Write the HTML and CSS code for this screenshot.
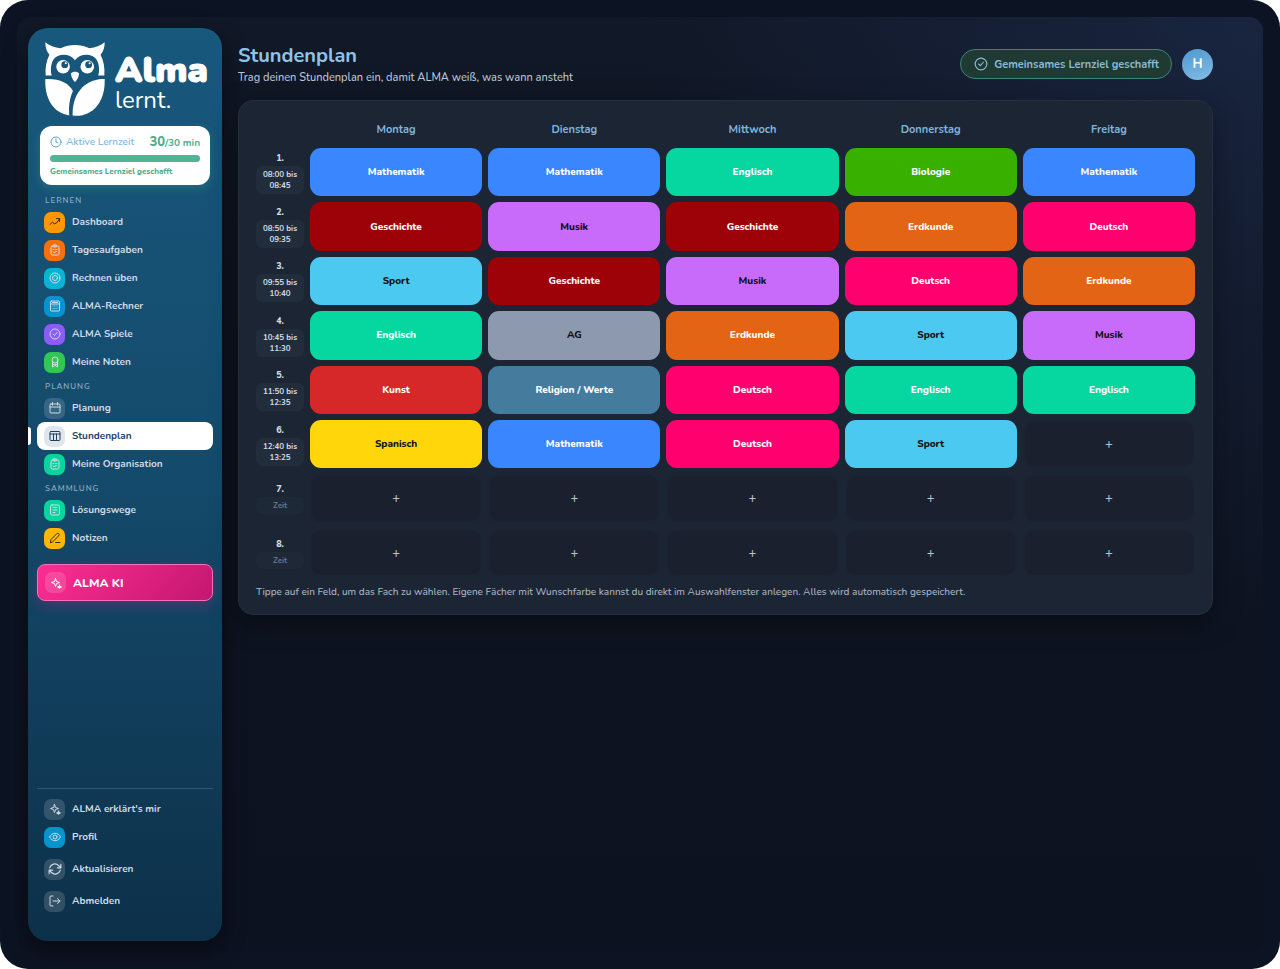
FILE: index.html
```
<!DOCTYPE html>
<html lang="de">
<head>
  <meta charset="UTF-8">
  <meta name="viewport" content="width=device-width, initial-scale=1.0">
  <title>Stundenplan - Alma lernt.</title>
  <link rel="stylesheet" href="styles.css">
</head>
<body>
  <div class="app">
    <div class="shell">
      <aside class="sidebar">
        <a class="logo" href="#">
          <svg class="owl" viewBox="0 0 176 216">
            <path fill="#fff" d="M1 0 C12 9 28 16 46 18 C74 5 102 5 130 18 C148 16 164 9 175 0 C175 14 172 26 163 37 C172 54 176 76 174 98 H156 C160 86 160 66 152 52 C138 32 104 32 88 53 C72 32 38 32 24 52 C16 66 16 86 20 98 H2 C0 76 4 54 13 37 C4 26 1 14 1 0Z"/>
            <circle cx="53" cy="72" r="20" fill="#fff"/>
            <circle cx="124" cy="72" r="20" fill="#fff"/>
            <circle cx="58" cy="66" r="10" fill="#175679"/>
            <circle cx="128" cy="66" r="10" fill="#175679"/>
            <circle cx="61" cy="62" r="3" fill="#fff"/>
            <circle cx="131" cy="62" r="3" fill="#fff"/>
            <path fill="#fff" d="M77 91 C81 85 95 85 99 91 C101 98 94 112 88 117 C82 112 75 98 77 91Z"/>
            <path fill="#fff" d="M1 108 C42 106 69 119 82 143 C74 161 69 181 71 215 C26 209 -2 166 1 108Z"/>
            <path fill="#fff" d="M175 108 C130 106 79 138 81 215 C139 222 178 174 175 108Z"/>
          </svg>
          <span class="logo-text"><b>Alma</b><span>lernt.</span></span>
        </a>

        <div class="learn-card">
          <div class="learn-row">
            <svg class="icon" viewBox="0 0 24 24"><circle cx="12" cy="12" r="10"/><path d="M12 6v6l4 2"/></svg>
            <span class="learn-label">Aktive Lernzeit</span>
            <span class="learn-time"><b>30</b>/30 min</span>
          </div>
          <div class="learn-bar"></div>
          <p>Gemeinsames Lernziel geschafft</p>
        </div>

        <nav class="nav">
          <h2>Lernen</h2>
          <a href="#"><span class="tile orange dark"><svg class="icon" viewBox="0 0 24 24"><path d="M2 17l5-5 4 4 4-2 6-8M15 5h6v6"/></svg></span>Dashboard</a>
          <a href="#"><span class="tile red"><svg class="icon" viewBox="0 0 24 24"><rect x="4" y="4" width="16" height="18" rx="3"/><rect x="9" y="2" width="6" height="4" rx="1"/><path d="M8 11h2M13 11h3M8 16l2 1 5-2"/></svg></span>Tagesaufgaben</a>
          <a href="#"><span class="tile cyan"><svg class="icon" viewBox="0 0 24 24"><circle cx="12" cy="12" r="10"/><circle cx="12" cy="12" r="5"/></svg></span>Rechnen üben</a>
          <a href="#"><span class="tile blue"><svg class="icon" viewBox="0 0 24 24"><rect x="3" y="2" width="18" height="20" rx="2"/><path d="M3 8h18M8 12v.1M12 12v.1M16 12v.1M8 17v.1M12 17v.1M16 17v.1M7 5h10"/></svg></span>ALMA-Rechner</a>
          <a href="#"><span class="tile purple"><svg class="icon" viewBox="0 0 24 24"><circle cx="12" cy="12" r="10"/><path d="M8 12l3 3 5-6"/></svg></span>ALMA Spiele</a>
          <a href="#"><span class="tile green"><svg class="icon" viewBox="0 0 24 24"><circle cx="12" cy="8" r="6"/><path d="M7 12v10l5-3 5 3V12M7 17h10"/></svg></span>Meine Noten</a>
          <h2>Planung</h2>
          <a href="#"><span class="tile"><svg class="icon" viewBox="0 0 24 24"><rect x="2" y="4" width="20" height="18" rx="2"/><path d="M2 10h20M7 1v5M17 1v5"/></svg></span>Planung</a>
          <a href="#" class="active"><span class="tile"><svg class="icon" viewBox="0 0 24 24"><rect x="2" y="3" width="20" height="18" rx="2"/><path d="M2 8h20M9 8v13M15 8v13"/></svg></span>Stundenplan</a>
          <a href="#"><span class="tile mint"><svg class="icon" viewBox="0 0 24 24"><rect x="4" y="4" width="16" height="18" rx="3"/><rect x="9" y="2" width="6" height="4" rx="1"/><path d="M8 11h2M13 11h3M8 16l2 1 5-2"/></svg></span>Meine Organisation</a>
          <h2>Sammlung</h2>
          <a href="#"><span class="tile mint"><svg class="icon" viewBox="0 0 24 24"><rect x="3" y="2" width="18" height="20" rx="3"/><path d="M8 7h8M8 12h8M8 17h4"/></svg></span>Lösungswege</a>
          <a href="#"><span class="tile yellow dark"><svg class="icon" viewBox="0 0 24 24"><path d="M3 21l1-6L16 3c2-2 6 2 4 4L8 19zM13 21h9"/></svg></span>Notizen</a>
        </nav>

        <button class="ki-btn" type="button">
          <span class="tile"><svg class="icon" viewBox="0 0 24 24"><path d="M11 3l2 6 6 2-6 2-2 6-2-6-6-2 6-2z"/><path fill="currentColor" d="M19 16l1 3 3 1-3 1-1 2-1-2-3-1 3-1z"/></svg></span>ALMA KI
        </button>

        <div class="nav nav-bottom">
          <a href="#"><span class="tile"><svg class="icon" viewBox="0 0 24 24"><path d="M11 3l2 6 6 2-6 2-2 6-2-6-6-2 6-2z"/><path fill="currentColor" d="M19 16l1 3 3 1-3 1-1 2-1-2-3-1 3-1z"/></svg></span>ALMA erklärt's mir</a>
          <a href="#"><span class="tile blue"><svg class="icon" viewBox="0 0 24 24"><path d="M1 12c5-10 17-10 22 0-5 10-17 10-22 0z"/><circle cx="12" cy="12" r="4"/></svg></span>Profil</a>
          <button type="button"><span class="tile"><svg class="icon big" viewBox="0 0 24 24"><path d="M3 10a9 9 0 0 1 15-4l4 4M22 4v6h-6M21 14a9 9 0 0 1-15 4l-4-4M2 20v-6h6"/></svg></span>Aktualisieren</button>
          <button type="button"><span class="tile"><svg class="icon" viewBox="0 0 24 24"><path d="M8 2H4a2 2 0 0 0-2 2v16a2 2 0 0 0 2 2h4M8 12h14M17 7l5 5-5 5"/></svg></span>Abmelden</button>
        </div>
      </aside>

      <main class="main">
        <header class="header">
          <div>
            <h1>Stundenplan</h1>
            <p>Trag deinen Stundenplan ein, damit ALMA weiß, was wann ansteht</p>
          </div>
          <div class="header-right">
            <span class="goal"><svg class="icon big" viewBox="0 0 24 24"><circle cx="12" cy="12" r="10"/><path d="M8 12l3 3 5-6"/></svg>Gemeinsames Lernziel geschafft</span>
            <button class="avatar" type="button">H</button>
          </div>
        </header>

        <section class="card">
          <table class="plan">
            <thead>
              <tr><td class="time"></td><th>Montag</th><th>Dienstag</th><th>Mittwoch</th><th>Donnerstag</th><th>Freitag</th></tr>
            </thead>
            <tbody>
              <tr>
                <th class="time">1.<button type="button">08:00 bis<br>08:45</button></th>
                <td><button class="mathe">Mathematik</button></td>
                <td><button class="mathe">Mathematik</button></td>
                <td><button class="englisch">Englisch</button></td>
                <td><button class="bio">Biologie</button></td>
                <td><button class="mathe">Mathematik</button></td>
              </tr>
              <tr>
                <th class="time">2.<button type="button">08:50 bis<br>09:35</button></th>
                <td><button class="geschichte">Geschichte</button></td>
                <td><button class="musik">Musik</button></td>
                <td><button class="geschichte">Geschichte</button></td>
                <td><button class="erdkunde">Erdkunde</button></td>
                <td><button class="deutsch">Deutsch</button></td>
              </tr>
              <tr>
                <th class="time">3.<button type="button">09:55 bis<br>10:40</button></th>
                <td><button class="sport">Sport</button></td>
                <td><button class="geschichte">Geschichte</button></td>
                <td><button class="musik">Musik</button></td>
                <td><button class="deutsch">Deutsch</button></td>
                <td><button class="erdkunde">Erdkunde</button></td>
              </tr>
              <tr>
                <th class="time">4.<button type="button">10:45 bis<br>11:30</button></th>
                <td><button class="englisch">Englisch</button></td>
                <td><button class="ag">AG</button></td>
                <td><button class="erdkunde">Erdkunde</button></td>
                <td><button class="sport">Sport</button></td>
                <td><button class="musik">Musik</button></td>
              </tr>
              <tr>
                <th class="time">5.<button type="button">11:50 bis<br>12:35</button></th>
                <td><button class="kunst">Kunst</button></td>
                <td><button class="religion">Religion / Werte</button></td>
                <td><button class="deutsch">Deutsch</button></td>
                <td><button class="englisch">Englisch</button></td>
                <td><button class="englisch">Englisch</button></td>
              </tr>
              <tr>
                <th class="time">6.<button type="button">12:40 bis<br>13:25</button></th>
                <td><button class="spanisch">Spanisch</button></td>
                <td><button class="mathe">Mathematik</button></td>
                <td><button class="deutsch">Deutsch</button></td>
                <td><button class="sport">Sport</button></td>
                <td><button class="empty">+</button></td>
              </tr>
              <tr>
                <th class="time">7.<button type="button" class="unset">Zeit</button></th>
                <td><button class="empty">+</button></td>
                <td><button class="empty">+</button></td>
                <td><button class="empty">+</button></td>
                <td><button class="empty">+</button></td>
                <td><button class="empty">+</button></td>
              </tr>
              <tr>
                <th class="time">8.<button type="button" class="unset">Zeit</button></th>
                <td><button class="empty">+</button></td>
                <td><button class="empty">+</button></td>
                <td><button class="empty">+</button></td>
                <td><button class="empty">+</button></td>
                <td><button class="empty">+</button></td>
              </tr>
            </tbody>
          </table>
          <p class="hint">Tippe auf ein Feld, um das Fach zu wählen. Eigene Fächer mit Wunschfarbe kannst du direkt im Auswahlfenster anlegen. Alles wird automatisch gespeichert.</p>
        </section>
      </main>
    </div>
  </div>
</body>
</html>
```
FILE: styles.css
```
* {
  margin: 0;
  padding: 0;
  box-sizing: border-box;
}
body {
  font-family: Nunito, 'Open Sans', sans-serif;
  font-size: 10px;
  background: #fff;
  color: #d0dbe8;
}
a {
  color: inherit;
  text-decoration: none;
}
button {
  font: inherit;
  color: inherit;
  background: none;
  border: none;
  cursor: pointer;
}
.icon {
  width: 12px;
  height: 12px;
  flex: none;
  fill: none;
  stroke: currentColor;
  stroke-width: 2;
  stroke-linecap: round;
  stroke-linejoin: round;
}
.icon.big {
  width: 14px;
  height: 14px;
}
.app {
  min-height: 100vh;
  padding: 17px;
  display: flex;
  background: #0c1322;
  border-radius: 28px;
}
.shell {
  flex: 1;
  display: flex;
  gap: 16px;
  padding: 11px 50px 11px 11px;
  border-radius: 14px;
  background:
    radial-gradient(circle at 100% 0, rgba(30, 45, 80, 0.6), transparent 40%),
    linear-gradient(180deg, #111827 0%, #0e1420 30%, #0c1220 100%);
}

/* Sidebar */
.sidebar {
  width: 194px;
  flex: none;
  display: flex;
  flex-direction: column;
  padding: 14px 9px 26px;
  border-radius: 20px;
  background: linear-gradient(180deg, #18587d 0%, #144a6b 50%, #0d3049 100%);
  box-shadow: 0 8px 24px rgba(0, 0, 0, 0.45);
}
.logo {
  display: flex;
  gap: 10px;
  padding: 0 8px;
  color: #fff;
}
.owl {
  width: 60px;
  height: 74px;
  flex: none;
}
.logo-text {
  display: flex;
  flex-direction: column;
  padding-top: 12px;
}
.logo-text b {
  font-size: 36px;
  line-height: 34px;
  font-weight: 900;
  -webkit-text-stroke: 1px #fff;
}
.logo-text span {
  font-size: 24px;
  line-height: 24px;
  font-weight: 400;
}
.learn-card {
  margin: 10px 3px 5px;
  padding: 8px 10px;
  border-radius: 12px;
  background: #fff;
  color: #4caf8c;
  box-shadow: 0 3px 10px rgba(76, 175, 140, 0.3);
}
.learn-row {
  display: flex;
  align-items: center;
  gap: 4px;
  height: 16px;
  white-space: nowrap;
}
.learn-row .icon {
  color: #5a9fd4;
}
.learn-label {
  font-weight: 600;
  color: #85b9e2;
}
.learn-time {
  margin-left: auto;
  font-weight: 700;
}
.learn-time b {
  font-size: 13px;
  font-weight: 800;
}
.learn-bar {
  height: 7px;
  margin: 5px 0;
  border-radius: 4px;
  background: #4fb593;
}
.learn-card p {
  font-size: 8px;
  line-height: 10px;
  font-weight: 800;
  white-space: nowrap;
}
.nav {
  display: flex;
  flex-direction: column;
}
.nav h2 {
  height: 18px;
  padding: 5px 8px 0;
  font-size: 8px;
  line-height: 12px;
  font-weight: 600;
  letter-spacing: 1px;
  text-transform: uppercase;
  color: #8cabc0;
}
.nav a,
.nav button {
  position: relative;
  display: flex;
  align-items: center;
  gap: 7px;
  height: 28px;
  padding: 0 7px;
  border-radius: 8px;
  font-weight: 700;
}
.nav a.active {
  background: #fff;
  color: #1b4265;
}
.nav a.active::before {
  content: "";
  position: absolute;
  left: -9px;
  top: 5px;
  width: 3px;
  height: 18px;
  border-radius: 0 3px 3px 0;
  background: #fff;
}
.tile {
  width: 21px;
  height: 21px;
  flex: none;
  display: flex;
  align-items: center;
  justify-content: center;
  border-radius: 7px;
  background: rgba(255, 255, 255, 0.15);
}
.active .tile {
  background: #e1e6eb;
}
.tile.dark { color: #3f2a12; }
.tile.orange { background: #ff9800; }
.tile.red { background: #fb6f09; }
.tile.cyan { background: #08b3d6; }
.tile.blue { background: #0694cc; }
.tile.purple { background: #8b5cf6; }
.tile.green { background: #32c653; }
.tile.mint { background: #08d49c; }
.tile.yellow { background: #ffb703; }
.ki-btn {
  display: flex;
  align-items: center;
  gap: 7px;
  height: 37px;
  margin-top: 12px;
  padding: 0 7px;
  border: 1px solid #f472b6;
  border-radius: 8px;
  background: linear-gradient(135deg, #ff2d92, #c2186f);
  color: #fff;
  font-size: 12px;
  font-weight: 800;
  box-shadow: 0 4px 14px rgba(233, 30, 140, 0.25);
}
.nav-bottom {
  margin-top: auto;
  padding-top: 6px;
  border-top: 1px solid rgba(255, 255, 255, 0.15);
}
.nav-bottom button {
  margin-top: 4px;
}

/* Header */
.main {
  flex: 1;
  min-width: 0;
}
.header {
  display: flex;
  justify-content: space-between;
  padding: 14px 0 14px;
}
h1 {
  font-size: 20px;
  line-height: 28px;
  font-weight: 700;
  color: #8ec3e8;
}
.header p {
  font-size: 11px;
  line-height: 16px;
  font-weight: 500;
  color: #bcc5d3;
}
.header-right {
  display: flex;
  align-items: center;
  gap: 10px;
}
.goal {
  display: flex;
  align-items: center;
  gap: 6px;
  height: 30px;
  padding: 0 12px 0 13px;
  border: 1px solid #3f8577;
  border-radius: 15px;
  background: #1f3933;
  color: #8ab8d6;
  font-size: 11px;
  font-weight: 700;
  white-space: nowrap;
}
.avatar {
  width: 31px;
  height: 31px;
  border-radius: 50%;
  background: linear-gradient(160deg, #4e98d0, #82bce4);
  color: #fff;
  font-size: 13px;
  font-weight: 700;
}

/* Stundenplan */
.card {
  padding: 9px 11px 14px;
  border: 1px solid #24303f;
  border-radius: 15px;
  background: #1b2534;
  box-shadow: 0 8px 28px rgba(0, 0, 0, 0.35);
}
.plan {
  width: 100%;
  height: 473px;
  table-layout: fixed;
  border-spacing: 6px;
}
.plan thead th {
  height: 26px;
  font-size: 11px;
  font-weight: 700;
  color: #7fb4dc;
}
.plan .time {
  width: 48px;
  vertical-align: middle;
  line-height: 14px;
  font-size: 9px;
  font-weight: 800;
}
.plan .time button {
  display: block;
  width: 100%;
  margin-top: 1px;
  padding: 3px 0;
  border-radius: 6px;
  background: #222d3c;
  font-size: 8px;
  line-height: 11px;
  font-weight: 700;
  white-space: nowrap;
}
.plan .time .unset {
  color: #6a7686;
  background: #1e2938;
}
.plan tbody td {
  height: 48px;
}
.plan td button {
  display: block;
  width: 100%;
  height: 100%;
  border-radius: 11px;
  color: #fff;
  font-size: 10px;
  font-weight: 800;
}
.plan .mathe { background: #3a86ff; }
.plan .englisch { background: #06d6a0; }
.plan .bio { background: #38b000; }
.plan .geschichte { background: #9d0208; }
.plan .erdkunde { background: #e36414; }
.plan .deutsch { background: #ff006e; }
.plan .kunst { background: #d62828; }
.plan .religion { background: #457b9d; }
.plan .musik { background: #c86bfa; }
.plan .sport { background: #4cc9f0; }
.plan .ag { background: #8d99ae; }
.plan .spanisch { background: #ffd60a; }
.plan .musik,
.plan .sport,
.plan .ag,
.plan .spanisch {
  color: #111;
}
.plan .empty {
  background: #1b202e;
  border: 2px solid #1c2433;
  color: #b7c1ce;
  font-size: 13px;
  font-weight: 600;
}
.hint {
  padding: 1px 6px 0;
  line-height: 16px;
  font-weight: 500;
  color: #a9b4c2;
}
@media (max-width: 768px) {
  .shell {
    flex-direction: column;
    padding-right: 11px;
  }
  .sidebar {
    width: 100%;
  }
  .card {
    overflow-x: auto;
  }
}
```
